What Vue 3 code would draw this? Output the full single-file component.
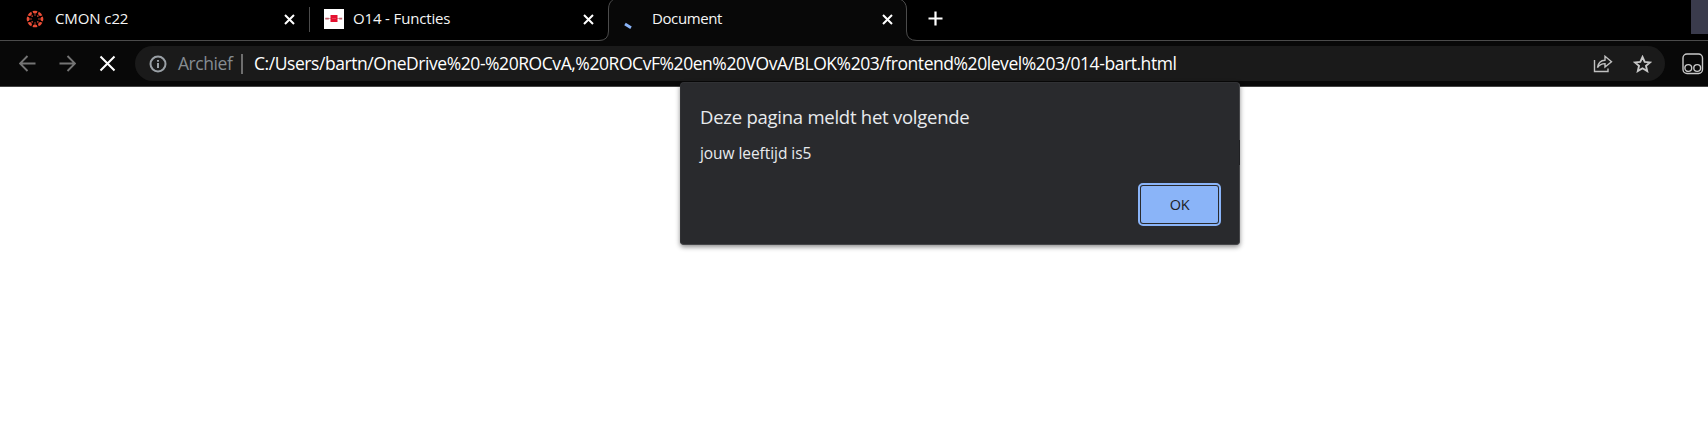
<script setup>
const spokes = [0, 45, 90, 135, 180, 225, 270, 315]
</script>

<template>
  <div class="browser">
    <header class="tabs">
      <div class="tab first">
        <svg class="favicon" width="18" height="18" viewBox="0 0 18 18">
          <g v-for="a in spokes" :key="a" :transform="`rotate(${a} 9 9)`">
            <path d="M6.500 1.100Q9 .2 11.500 1.100Q11.200 3.500 9 3.800Q6.800 3.500 6.500 1.100Z" fill="#ea4c35" />
            <circle cx="9" cy="5" r=".8" fill="#c8402d" />
          </g>
        </svg>
        <span class="label cmon">CMON c22</span>
        <svg class="close" width="11" height="11" viewBox="0 0 11 11"><path d="M1 1l9 9M10 1l-9 9" /></svg>
      </div>
      <div class="divider"></div>
      <div class="tab second">
        <svg class="favicon" width="20" height="20" viewBox="0 0 20 20">
          <path d="M0 0h20v20H0z" fill="#fff" />
          <path d="M1.500 9.500h16.500" stroke="#e0a0a8" stroke-width="1" />
          <path d="M1.300 8.800h3.500v1.700H1.300zM15.200 8.800h3v1.700h-3z" fill="#c0606c" />
          <path d="M6.500 6h7v7h-7z" fill="#e4102f" />
          <path d="M8 9.500h4" stroke="#ec3c54" />
        </svg>
        <span class="label functies">O14 - Functies</span>
        <svg class="close" width="11" height="11" viewBox="0 0 11 11"><path d="M1 1l9 9M10 1l-9 9" /></svg>
      </div>
      <div class="tab active">
        <svg class="outline" width="318" height="42" viewBox="0 0 318 42">
          <path class="shape" d="M0 42V40.500Q9.500 40.500 9.500 31V9Q9.500 2 15 -1H301Q307.500 2 307.500 9V31Q307.500 40.500 318 40.500V42Z" />
          <path class="edge" d="M0 40.500Q9.500 40.500 9.500 31V9Q9.500 2 15 -1M301 -1Q307.500 2 307.500 9V31Q307.500 40.500 318 40.500" />
        </svg>
        <svg class="spinner" width="20" height="20" viewBox="0 0 20 20"><path d="M2 14L8 17.800" /></svg>
        <span class="label document">Document</span>
        <svg class="close" width="11" height="11" viewBox="0 0 11 11"><path d="M1 1l9 9M10 1l-9 9" /></svg>
      </div>
      <svg class="plus" width="15" height="15" viewBox="0 0 15 15"><path d="M7.500 .5v14M.5 7.500h14" /></svg>
      <div class="corner"></div>
    </header>

    <nav class="toolbar">
      <svg class="nav back" width="17" height="17" viewBox="0 0 17 17"><path d="M16.500 8.500H1.500M8.500 1L1 8.500L8.500 16" /></svg>
      <svg class="nav forward" width="17" height="17" viewBox="0 0 17 17"><path d="M.5 8.500h15M8.500 1L16 8.500L8.500 16" /></svg>
      <svg class="nav stop" width="17" height="17" viewBox="0 0 17 17"><path d="M1.500 1.500l14 14M15.500 1.500l-14 14" /></svg>
      <div class="omnibox">
        <svg class="info" width="18" height="18" viewBox="0 0 18 18">
          <circle cx="9" cy="9" r="7.500" /><path d="M9 8v5M9 5v1.800" />
        </svg>
        <span class="scheme">Archief</span>
        <span class="bar"></span>
        <span class="url">C:/Users/bartn/OneDrive%20-%20ROCvA,%20ROCvF%20en%20VOvA/BLOK%203/frontend%20level%203/014-bart.html</span>
        <svg class="share" width="20" height="18" viewBox="0 0 20 18">
          <path d="M1.500 5v11.500h13.500v-3" />
          <path d="M4.500 12.500Q5.500 5.500 12 5.200V1.300L18.500 6.800L12 12V8.600Q7.500 8.500 4.500 12.500Z" />
        </svg>
        <svg class="star" width="19" height="18" viewBox="0 0 19 18">
          <path d="M9.500 2L11.700 6.900L17 7.400L13 10.900L14.200 16.100L9.500 13.300L4.800 16.100L6 10.900L2 7.400L7.300 6.900Z" />
        </svg>
      </div>
      <svg class="extension" width="22" height="22" viewBox="0 0 22 22">
        <rect x="1" y="1" width="19.500" height="19.500" rx="4" />
        <circle cx="6.300" cy="15" r="3.400" /><circle cx="15.200" cy="15" r="3.400" />
      </svg>
    </nav>

    <section class="dialog">
      <h1>Deze pagina meldt het volgende</h1>
      <p>jouw leeftijd is5</p>
      <button><span>OK</span></button>
    </section>
  </div>
</template>

<style>
body { background: #fff; }
</style>

<style scoped>
.browser { position: relative; width: 1708px; height: 437px; overflow: hidden; background: #fff; font-family: "Open Sans", "Noto Sans", sans-serif; }
.browser * { box-sizing: border-box; }
svg { display: block; flex: none; fill: none; }
.tabs { display: flex; height: 41px; background: #000; border-bottom: 1px solid #4b4b4b; color: #f5f5f5; font-size: 15px; line-height: 20px; }
.tab { display: flex; align-items: center; height: 38px; flex: none; }
.first { width: 309px; padding: 0 14px 0 26px; }
.second { width: 289px; padding: 0 5px 0 14px; }
.label { margin-left: 11px; padding-bottom: 2px; white-space: nowrap; letter-spacing: -.1px; }
.functies { margin-left: 9px; letter-spacing: -.15px; }
.close { margin-left: auto; stroke: #fff; stroke-width: 2; }
.divider { width: 1px; height: 25px; margin-top: 7px; background: #4b4b4b; }
.active { position: relative; width: 318px; padding: 0 24px 0 24px; }
.active > * { position: relative; }
.active .outline { position: absolute; left: 0; top: 0; }
.shape { fill: #080808; }
.edge { stroke: #4b4b4b; }
.spinner { stroke: #8ab4f8; stroke-width: 2.800; margin-top: 2px; }
.document { margin-left: 9px; letter-spacing: -.4px; }
.plus { margin: 11px 0 0 11px; stroke: #fff; stroke-width: 2.200; }
.corner { width: 17px; height: 34px; margin-left: auto; background: #3a3b4c; }
.toolbar { display: flex; align-items: center; height: 46px; background: #080808; border-bottom: 1px solid #444; padding-left: 19px; }
.nav { stroke: #747474; stroke-width: 1.900; }
.forward { margin-left: 23px; }
.stop { margin-left: 23px; stroke: #fff; stroke-width: 2; }
.omnibox { display: flex; align-items: center; flex: none; width: 1530px; height: 35px; margin-left: 19px; padding: 0 13px 0 14px; border-radius: 18px; background: #1a1a1a; font-size: 17.500px; line-height: 35px; white-space: nowrap; }
.info { stroke: #9aa0a6; stroke-width: 2; }
.scheme { margin-left: 11px; width: 55px; color: #858c92; letter-spacing: -.45px; }
.bar { width: 2px; height: 20px; margin-left: 8px; background: #6e6e6e; }
.url { width: 924px; margin-left: 11px; color: #fff; letter-spacing: -.44px; }
.share { margin-left: auto; stroke: #c0c0c0; stroke-width: 1.400; }
.star { margin-left: 20px; stroke: #c8c8c8; stroke-width: 1.900; }
.extension { margin-left: 17px; stroke: #c8c8c8; stroke-width: 1.400; }
.dialog { position: absolute; left: 680px; top: 82px; width: 560px; height: 163px; padding: 20px 18px 0 19px; background: #292a2d; border: 1px solid #454649; border-top-color: #303134; border-left-color: #303134; border-radius: 4px; box-shadow: 0 2px 5px rgba(0, 0, 0, .45); color: #e8eaed; display: flex; flex-direction: column; white-space: nowrap; }
.dialog::after { content: ""; position: absolute; right: -1px; top: 57px; width: 1px; height: 25px; background: #202124; }
h1 { margin: 0; font-size: 18.500px; line-height: 28px; font-weight: 400; letter-spacing: -.25px; }
p { margin: 10px 0 0; font-size: 15.500px; line-height: 24px; letter-spacing: -.06px; }
button { width: 83px; height: 43px; margin-top: 18px; padding: 1px; border: 2px solid #8ab4f8; border-radius: 5px; background: #292a2d; flex: none; align-self: flex-end; }
button span { display: block; height: 100%; border-radius: 2px; background: #8ab4f8; color: #202124; font: 14.500px/37px "Open Sans", sans-serif; letter-spacing: -.3px; }
</style>
